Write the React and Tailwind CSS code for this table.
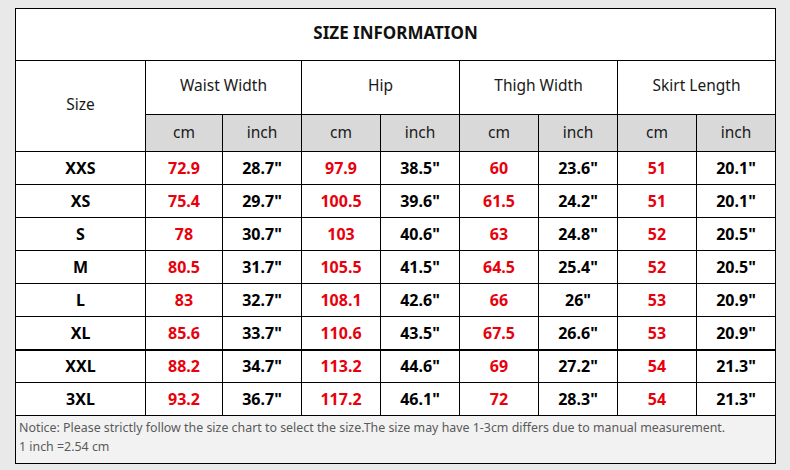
import React from "react";

const rows = [
  { size: "XXS", v: ["72.9", "28.7\"", "97.9", "38.5\"", "60", "23.6\"", "51", "20.1\""] },
  { size: "XS", v: ["75.4", "29.7\"", "100.5", "39.6\"", "61.5", "24.2\"", "51", "20.1\""] },
  { size: "S", v: ["78", "30.7\"", "103", "40.6\"", "63", "24.8\"", "52", "20.5\""] },
  { size: "M", v: ["80.5", "31.7\"", "105.5", "41.5\"", "64.5", "25.4\"", "52", "20.5\""] },
  { size: "L", v: ["83", "32.7\"", "108.1", "42.6\"", "66", "26\"", "53", "20.9\""] },
  { size: "XL", v: ["85.6", "33.7\"", "110.6", "43.5\"", "67.5", "26.6\"", "53", "20.9\""] },
  { size: "XXL", v: ["88.2", "34.7\"", "113.2", "44.6\"", "69", "27.2\"", "54", "21.3\""] },
  { size: "3XL", v: ["93.2", "36.7\"", "117.2", "46.1\"", "72", "28.3\"", "54", "21.3\""] },
];

const groups = ["Waist Width", "Hip", "Thigh Width", "Skirt Length"];
const widths = [130, 77, 79, 79, 79, 79, 79, 79, 79];

export default function App() {
  return (
    <div className="w-[790px] h-[470px] bg-[#e9e9e9] pt-[8px] pl-[15px]" style={{ fontFamily: '"Noto Sans", "Open Sans", sans-serif' }}>
      <table className="table-fixed border-collapse w-[760px] bg-white text-[#1a1a1a]">
        <colgroup>
          {widths.map((w, i) => (
            <col key={i} style={{ width: w }} />
          ))}
        </colgroup>
        <tbody>
          <tr className="h-[52px]">
            <td colSpan={9} className="border border-black text-center font-bold text-[17px] text-[#111] pb-[3px]">
              SIZE INFORMATION
            </td>
          </tr>
          <tr className="h-[54px]">
            <td rowSpan={2} className="border border-black text-center text-[15.5px] pb-[2px]">Size</td>
            {groups.map((g) => (
              <td key={g} colSpan={2} className="border border-black text-center text-[15.5px] pb-[3px]">{g}</td>
            ))}
          </tr>
          <tr className="h-[37px] bg-[#d9d9d9]">
            {groups.map((g) => (
              <React.Fragment key={g}>
                <td className="border border-black text-center text-[15.5px]">cm</td>
                <td className="border border-black text-center text-[15.5px]">inch</td>
              </React.Fragment>
            ))}
          </tr>
          {rows.map((r) => (
            <tr key={r.size} className={r.size === "XXL" ? "h-[33px] border-t-2 border-black" : "h-[33px]"}>
              <td className={r.size === "XXL" ? "border border-black border-t-2 text-center font-bold text-[16px] text-black" : "border border-black text-center font-bold text-[16px] text-black"}>
                {r.size}
              </td>
              {r.v.map((val, i) => (
                <td
                  key={i}
                  className={
                    (r.size === "XXL" ? "border-t-2 " : "") +
                    (i % 2 === 0
                      ? "border border-black text-center font-bold text-[16px] text-[#e8000b]"
                      : "border border-black text-center font-bold text-[16px] text-black")
                  }
                >
                  {val}
                </td>
              ))}
            </tr>
          ))}
          <tr className="h-[48px] bg-[#f2f2f2]">
            <td colSpan={9} className="border border-black align-top px-[3px] pt-[2px] text-[12.4px] leading-[19px] text-[#5a5a5a]">
              Notice: Please strictly follow the size chart to select the size.The size may have 1-3cm differs due to manual measurement.
              <br />1 inch =2.54 cm
            </td>
          </tr>
        </tbody>
      </table>
    </div>
  );
}
